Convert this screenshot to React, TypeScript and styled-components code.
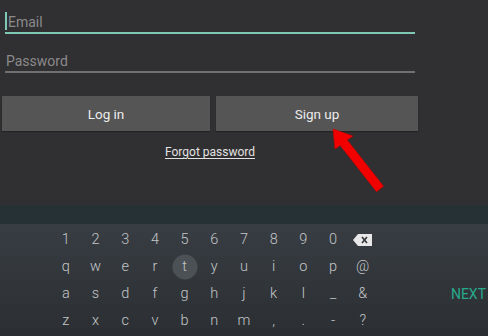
import styled, { createGlobalStyle } from 'styled-components';

const GlobalStyle = createGlobalStyle`
  html, body {
    margin: 0;
    padding: 0;
    background: #302f31;
  }
  body {
    font-family: Roboto, "Noto Sans", "Liberation Sans", sans-serif;
  }
`;

const Screen = styled.div`
  position: relative;
  width: 488px;
  height: 336px;
  overflow: hidden;
  display: flex;
  flex-direction: column;
  background: #302f31;
`;

const Form = styled.div`
  height: 205px;
  box-sizing: border-box;
  padding: 10px 0 0 0;
  display: flex;
  flex-direction: column;
`;

const Field = styled.div<{ $focused?: boolean }>`
  margin: 0 73px 0 5px;
  height: 22px;
  display: flex;
  align-items: flex-end;
  border-bottom: 2px solid ${p => (p.$focused ? '#7fc8b3' : '#707070')};
  & + & {
    margin-top: 15px;
  }
`;

const Caret = styled.span`
  display: inline-block;
  width: 2px;
  height: 18px;
  margin-bottom: 2px;
  background: #7fc8b3;
`;

const Placeholder = styled.span<{ $indent: number }>`
  margin-left: ${p => p.$indent}px;
  font-size: 14px;
  line-height: 18px;
  padding-bottom: 1px;
  color: #8b8a8c;
`;

const Buttons = styled.div`
  display: flex;
  gap: 6px;
  margin: 23px 70px 0 2px;
`;

const Button = styled.div<{ $w: number }>`
  width: ${p => p.$w}px;
  height: 35px;
  background: #555555;
  color: #ececec;
  font-size: 13.5px;
  display: flex;
  align-items: center;
  justify-content: center;
  box-shadow: 0 1px 1px rgba(0, 0, 0, 0.25);
`;

const Forgot = styled.div`
  margin-top: 14px;
  width: 420px;
  text-align: center;
  font-size: 12px;
  color: #e2e2e2;
  text-decoration: underline;
  text-underline-offset: 2px;
`;

const Band = styled.div`
  height: 19px;
  background: #263135;
`;

const Keyboard = styled.div`
  flex: 1;
  background: linear-gradient(#383d43, #2b2f33);
  padding: 2px 2px 0 51px;
  display: grid;
  grid-template-columns: repeat(11, 29.7px) 1fr;
  grid-auto-rows: 27px;
`;

const Key = styled.div<{ $active?: boolean }>`
  display: flex;
  align-items: center;
  justify-content: center;
  font-size: 14.5px;
  font-weight: 300;
  color: #c4c6c8;
  position: relative;
  & > span {
    position: relative;
  }
  ${p =>
    p.$active &&
    `
    &::before {
      content: '';
      position: absolute;
      width: 25px;
      height: 25px;
      border-radius: 50%;
      background: #4c5156;
      left: 50%;
      top: 50%;
      transform: translate(-50%, -50%);
    }
  `}
`;

const Next = styled.div`
  grid-column: 12;
  grid-row: 3;
  justify-self: end;
  align-self: center;
  font-size: 14px;
  color: #27a98c;
`;

const Arrow = styled.svg`
  position: absolute;
  left: 325px;
  top: 122px;
`;

const rows = [
  ['1', '2', '3', '4', '5', '6', '7', '8', '9', '0', 'bksp'],
  ['q', 'w', 'e', 'r', 't', 'y', 'u', 'i', 'o', 'p', '@'],
  ['a', 's', 'd', 'f', 'g', 'h', 'j', 'k', 'l', '_', '&'],
  ['z', 'x', 'c', 'v', 'b', 'n', 'm', ',', '.', '-', '?'],
];

function Backspace() {
  return (
    <svg width="19" height="12" viewBox="0 0 19 12">
      <path d="M5 0 H19 V12 H5 L0 6 Z" fill="#e8e8e8" />
      <path d="M9 3 L14 9 M14 3 L9 9" stroke="#2f3337" strokeWidth="1.6" />
    </svg>
  );
}

export default function App() {
  return (
    <Screen>
      <GlobalStyle />
      <Form>
        <Field $focused>
          <Caret />
          <Placeholder $indent={1}>Email</Placeholder>
        </Field>
        <Field>
          <Placeholder $indent={1}>Password</Placeholder>
        </Field>
        <Buttons>
          <Button $w={208}>Log in</Button>
          <Button $w={202}>Sign up</Button>
        </Buttons>
        <Forgot>Forgot password</Forgot>
      </Form>
      <Band />
      <Keyboard>
        {rows.map((row, r) =>
          row.map((k, c) => (
            <Key key={`${r}-${c}`} $active={k === 't'} style={{ gridRow: r + 1, gridColumn: c + 1 }}>
              {k === 'bksp' ? <Backspace /> : <span>{k}</span>}
            </Key>
          ))
        )}
        <Next>NEXT</Next>
      </Keyboard>
      <Arrow width="66" height="72" viewBox="0 0 66 72">
        <path
          d="M8 7 L28 14 L22.2 17.9 L58.5 64.2 L51.5 69.8 L15.2 23.5 L10 27 Z"
          fill="#f20000"
          stroke="#c80000"
          strokeWidth="0.6"
          strokeLinejoin="round"
        />
      </Arrow>
    </Screen>
  );
}
